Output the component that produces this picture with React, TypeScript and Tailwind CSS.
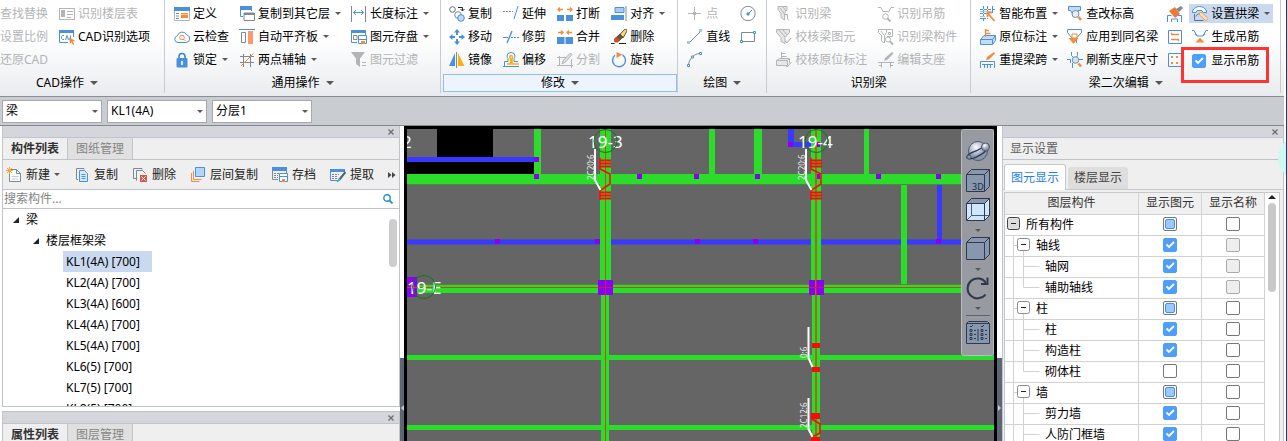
import { useState } from 'react'
import type { ReactNode } from 'react'
import clsx from 'clsx'

// =============================================================================
// ICONS
// =============================================================================

const BLUE = '#4a90dc'
const SLATE = '#7d8a96'
const ORANGE = '#f58b3c'

const icons: Record<string, ReactNode> = {
  floorTable: (
    <>
      <rect x="0.5" y="2.5" width="15" height="11" />
      <path d="M2 4h4v7H2z" fill="currentColor" stroke="none" />
      <path d="M8 5.500h6M8 8.500h6M8 11.500h4" />
    </>
  ),
  cadOptions: (
    <>
      <path d="M0 1h15v3H0z" fill={BLUE} stroke="none" />
      <path d="M.5 4v9.500H9M14.500 4v4" stroke={BLUE} />
      <path d="M5 6.500H3.500L2.500 7.500v2l1 1H5M6.500 11l1.500-4.500L9.500 11M11.500 6.500v4" stroke={BLUE} />
      <path d="M10 8.500l6 3-2.200 1 1.500 2.700-1.300.8-1.600-3L11 15z" fill={ORANGE} stroke="none" />
    </>
  ),
  define: (
    <>
      <path d="M0 1h16v4H0z" fill={BLUE} stroke="none" />
      <path d="M.5 5v9.500h15V5" stroke="#a9b8c8" fill="#fff" />
      <path d="M2 7.500h3M2 10h3M2 12.500h3" stroke={SLATE} />
      <path d="M7 7h7v5H7z" fill={ORANGE} stroke="none" />
      <path d="M7 8.500h7" stroke="#ffd27a" />
    </>
  ),
  cloud: (
    <>
      <path d="M4 13.500a3.400 3.400 0 0 1-.6-6.700A5 5 0 0 1 12.800 6 3.800 3.800 0 0 1 12 13.500z" stroke={BLUE} />
      <circle cx="8" cy="8.500" r="2.300" stroke={ORANGE} />
      <path d="M9.700 10.200l2 2" stroke={ORANGE} />
    </>
  ),
  lock: (
    <>
      <path d="M5 7V4.500a3 3 0 0 1 6 0V7" stroke="#3f80cf" strokeWidth="1.600" />
      <rect x="2.500" y="6" width="11" height="9.500" rx="1" fill={BLUE} stroke="none" />
      <path d="M8 9v4" stroke="#fff" strokeWidth="1.600" />
    </>
  ),
  copyFloor: (
    <>
      <path d="M1 0h12v4H1z" fill={BLUE} stroke="none" />
      <path d="M1.500 4v6.500H4M12.500 4v1" stroke={BLUE} />
      <path d="M5 7h10.500v7.500H5z" stroke={SLATE} fill="#fff" />
      <path d="M5 8h10.500" stroke={SLATE} strokeWidth="2" />
    </>
  ),
  slab: (
    <>
      <path d="M0 .5h16" stroke={BLUE} />
      <path d="M2.500 3.500h4v10h-4z" stroke={SLATE} />
      <path d="M9 2h5v13H9z" fill="#fb9a6b" stroke="none" />
    </>
  ),
  auxAxis: (
    <>
      <path d="M1 4.500h14M1 10.500h14M4.500 2v13M11.500 2v13" stroke={SLATE} />
      <path d="M2 14L14.500 1.500" stroke={ORANGE} />
    </>
  ),
  dimension: (
    <>
      <path d="M.5 0v16M14.500 0v16" stroke={SLATE} />
      <path d="M2 6.500h11M5 4L2.500 6.500 5 9M10 4l2.500 2.500L10 9" stroke={BLUE} />
    </>
  ),
  store: (
    <>
      <path d="M0 1h15v3H0z" fill={BLUE} stroke="none" />
      <path d="M.5 4v9.500H6M14.500 4v2" stroke={BLUE} />
      <path d="M2.500 6.500H6v4H2.500z" stroke={SLATE} />
      <path d="M7.500 6.500h8v8h-8z" stroke={BLUE} fill="#fff" />
      <path d="M8 10.500h7" stroke={BLUE} />
      <path d="M10 12h4v3h-4z" fill={ORANGE} stroke="none" />
    </>
  ),
  filter: (
    <>
      <path d="M0 0h14L9 6.500V15L5 12V6.500z" fill="currentColor" stroke="none" />
      <path d="M11 10.500h4M11 13.500h4" />
    </>
  ),
  copyRound: (
    <>
      <circle cx="3.500" cy="3.500" r="2.800" stroke="#5f6c78" fill="#fff" />
      <path d="M9 1.500h4.500v3M11.500 3l2 2 2-2" stroke="#222" />
      <circle cx="9" cy="9" r="3.300" stroke={SLATE} fill="#fff" />
      <circle cx="12" cy="12" r="3.300" stroke={BLUE} fill="#bcd9f8" />
    </>
  ),
  move: (
    <path
      d="M8 0l3 3.500H9V6H7V3.500H5zM8 16l3-3.500H9V10H7v2.500H5zM0 8l3.500-3v2H6v2H3.500v2zM16 8l-3.500-3v2H10v2h2.500v2z"
      fill={BLUE}
      stroke="none"
    />
  ),
  mirror: (
    <>
      <path d="M6 1v13H0z" fill={BLUE} stroke="none" />
      <path d="M7.500 0v16" stroke={SLATE} />
      <path d="M9 1l6.500 13H9z" fill="#fbb012" stroke="none" />
    </>
  ),
  extend: (
    <>
      <path d="M0 5.500h10" stroke={SLATE} strokeDasharray="2 1" />
      <path d="M15 0l-4 13" stroke={BLUE} />
    </>
  ),
  trim: (
    <>
      <path d="M0 8.500h5" stroke={SLATE} />
      <path d="M8 8.500h8" stroke={BLUE} strokeDasharray="2 1" />
      <path d="M9 2L4 14" stroke={BLUE} strokeWidth="1.400" />
    </>
  ),
  offset: (
    <>
      <path d="M1.500 14V9.500H5V6.500A4 4 0 0 1 4 4a4 3.500 0 0 1 8 0 4 4 0 0 1-1 2.500v3h4" stroke={BLUE} />
      <path d="M0 14.500h16" stroke={BLUE} />
      <path d="M4 12h3.500V6.500C6 5 7 3.500 8 3.500s2 1.500 1 3V12H16" stroke="#fbb012" strokeWidth="1.500" />
    </>
  ),
  breakApart: (
    <>
      <path d="M0 9h7v6H0zM9 9h7v6H9z" fill={BLUE} stroke="none" />
      <path d="M6 3.500H1M3 1.500l-2 2 2 2M10 3.500h5M13 1.500l2 2-2 2" stroke={ORANGE} strokeWidth="1.300" />
    </>
  ),
  merge: (
    <>
      <path d="M0 8h7.500v7H0zM8.500 8H16v7H8.500z" fill={BLUE} stroke="none" />
      <path d="M1 3.500h5M4 1.500l2 2-2 2M15 3.500h-5M12 1.500l-2 2 2 2" stroke={ORANGE} strokeWidth="1.300" />
    </>
  ),
  split: (
    <>
      <path d="M0 5.500h9M2.500 4v10M0 13.500h16M14.500 7v9" />
      <path d="M5 12l1.500-4 7-7L15 2.500l-6 7z" fill="#dcdee0" />
    </>
  ),
  align: (
    <>
      <path d="M4 1.500h9v5H4z" fill="#a9ccf4" stroke={BLUE} />
      <path d="M0 9h13v5H0z" fill={BLUE} stroke="none" />
      <path d="M15 0v15" stroke={SLATE} />
    </>
  ),
  erase: (
    <>
      <path d="M14 0h2v2l-4 7-4-2.500z" fill="#f7d97c" stroke="#3c3020" strokeWidth=".8" />
      <path d="M9 5l3 3-4 4-3.500-3z" fill="#6d5434" stroke="#3c3020" strokeWidth=".6" />
      <circle cx="5.500" cy="11" r="2.600" fill="#c9502e" stroke="none" />
      <path d="M0 14.500h3.500M8 14.500h7" stroke="#222" />
    </>
  ),
  rotate: (
    <>
      <path d="M11.500 2.800a6.500 6.500 0 1 1-7.500.4" stroke={BLUE} strokeWidth="1.400" />
      <path d="M5.500 0l6 2.500-6 3.500z" fill={ORANGE} stroke="none" />
    </>
  ),
  point: (
    <>
      <path d="M7.500 1v13M1 7.500h13" />
      <path d="M6 6h3v3H6z" fill="currentColor" stroke="none" />
    </>
  ),
  line: (
    <>
      <path d="M2 14L14 2" stroke={SLATE} />
      <path d="M0 12h3v3H0zM12 0h3v3h-3z" fill="#9cc5f2" stroke="none" />
    </>
  ),
  arc: (
    <>
      <path d="M1.500 13C2 7 7 1.500 13 1.500" stroke={SLATE} />
      <path d="M.5 12.500h2v2h-2zM12.500.5h2v2h-2zM4.500 4h2v2h-2z" stroke={BLUE} fill="#fff" />
    </>
  ),
  circle: (
    <>
      <circle cx="8" cy="7.500" r="7.200" stroke={SLATE} />
      <path d="M8 8l4-4" stroke={BLUE} />
      <path d="M7 7h2v2H7z" fill={BLUE} stroke={BLUE} />
    </>
  ),
  rect: (
    <>
      <path d="M1.500 3.500h13v9h-13z" stroke={SLATE} />
      <path d="M.5 11.500h2v2h-2zM13.500 2.500h2v2h-2z" stroke={BLUE} fill="#fff" />
    </>
  ),
  beamFind: (
    <path d="M2 .5h9v3L8.500 7.500V14L5 11.500v-4L2 3.500zM4 2l4.500 6M7 1l3 4M9 8.500h2.500V13l1.500 1.500" fill="#e6e7e8" />
  ),
  beamCheck: (
    <path d="M.5.500h13v3L9 8.500v6l-4-2v-4l-4.500-5zM3 1l6 7M7 1l4 5M9 12l2 2 4-5" fill="#e6e7e8" />
  ),
  noteCheck: (
    <path d="M5.500 0v7M5.500 1.500h4M5.500 4.500h5M.5 8.500l3-2h10l-2 2zM.5 8.500h11v5H.5zM13.500 7v4M9 13l2 2 4.500-5" fill="#e6e7e8" />
  ),
  hangFind: (
    <>
      <path d="M0 1.500h3l2 4h6l2-4h3" />
      <circle cx="7.500" cy="10.500" r="2.800" />
      <path d="M9.500 12.500l3 3" strokeWidth="2" />
    </>
  ),
  partFind: (
    <>
      <path d="M.5.500h8v3l-2 3V14l-3-2V6.500l-3-3zM8 .5h6.500v7H9M10.500 3.500h2v2h-2zM3 2l3 4" />
      <circle cx="10" cy="10.500" r="2.500" />
      <path d="M12 12.500l3 3" strokeWidth="2" />
    </>
  ),
  support: (
    <>
      <path d="M0 10.500h16M3.500 11v4.500M12.500 11v4.500M1 13.500h3M12 13.500h3" />
      <path d="M6 9l1-3 7-6 1.500 1.500L9 8z" fill="currentColor" stroke="none" />
    </>
  ),
  smartLay: (
    <>
      <path d="M0 3.500h15M0 7.500h9M0 12.500h6M3.500 0v16M7.500 0v13M12.500 0v7" stroke={BLUE} strokeDasharray="3 1" />
      <path d="M0 5.500h10M0 10.500h5" stroke="#9cc5f2" />
      <path d="M7.500 7l7 8M7.500 6.500H12M7.500 6.500V11" stroke={ORANGE} strokeWidth="1.800" />
    </>
  ),
  origNote: (
    <>
      <path d="M.5 10.500l3.500-4h11.500v5l-3 4H.5zM.5 10.500h12v5M12.500 10.500l3-4" fill="#c3ddf8" stroke={BLUE} />
      <path d="M5.500 0v8M5.500 1.500H9M5.500 4.500h5" stroke={ORANGE} strokeWidth="1.300" />
    </>
  ),
  respan: (
    <>
      <path d="M.5 16V9.500h14V16M4.500 16v-3M7.500 16v-3M10.500 16v-3M2 12.500h11" stroke={BLUE} />
      <path d="M6 8l1-3 7-5 1 1.500L9 7.500z" fill={ORANGE} stroke="none" />
    </>
  ),
  elevation: (
    <>
      <path d="M1.500.500h12v4h-2.500v4H6L3.500 4.500h-2z" stroke={BLUE} fill="#c3dcf8" />
      <circle cx="8.500" cy="8" r="3.500" stroke={SLATE} fill="#e2effd" />
      <path d="M11.500 11l2.500 3" stroke={ORANGE} strokeWidth="2.600" />
    </>
  ),
  applyBeam: (
    <>
      <path d="M.5.500h14v3L9.500 9v5M.5.500v3L5 9" stroke={BLUE} fill="#fff" />
      <path d="M5 5h5v4H5z" stroke={ORANGE} />
      <path d="M1.500 9h10l-5 6z" fill={ORANGE} stroke="none" />
    </>
  ),
  refreshSize: (
    <>
      <path d="M0 7.500h3.500V11M4.500 0v3.500L6 5M10.500 0v3.500L9.500 5M12 7.500h4M5.500 11v5" stroke={BLUE} />
      <circle cx="8.500" cy="8" r="3.300" stroke={SLATE} fill="#cfe4fa" />
      <path d="M11.500 11.500l2.500 3" stroke={ORANGE} strokeWidth="2.600" />
    </>
  ),
  brush: (
    <>
      <path d="M.5 16V9.500h4M10 9.500h4.500V16M4.500 16v-3h6v3" stroke={BLUE} />
      <path d="M2 5l6-4 5 7-5 4z" fill="#ef7a35" stroke="none" />
      <path d="M9 3l5-3 2 2-4 4z" fill={SLATE} stroke="none" />
    </>
  ),
  section: (
    <>
      <path d="M1.500 1.500h13v13h-13z" stroke={BLUE} />
      <path d="M4 5.500h8M4 10.500h8M4 5l1-1M12 11l-1 1" stroke={ORANGE} strokeWidth="1.400" />
    </>
  ),
  dots: (
    <>
      <path d="M1.500 1.500h13v13h-13z" stroke={BLUE} />
      <path d="M4 4h2v2H4zM9 4h2v2H9zM4 10h2v2H4zM9 10h2v2H9z" fill={ORANGE} stroke="none" />
    </>
  ),
  arch: (
    <>
      <path d="M.5 6.500V5C3-1 12-1 14.500 5v1.500H11l-1-2H5l-1 2z" stroke={BLUE} fill="#fff" />
      <path d="M2.500 8v6.500h9M4 10.500c2-4 5-4 7 0" stroke="#5c6f86" />
      <path d="M7 7l3-.5 6 6-2 2.500-6.500-6z" fill="#fbe0bb" stroke={ORANGE} strokeWidth=".8" />
    </>
  ),
  hanger: (
    <>
      <path d="M0 1.500h2l3 5.500h6l3-5.500h2M3 5.500h2M11 5.500h2" stroke={BLUE} />
      <path d="M8 8.500l4.500 5h-9z" fill={ORANGE} stroke="none" />
    </>
  ),
  newDoc: (
    <>
      <path d="M4 2.500h6.500l4 4v8H3.500V7M10.500 2.500v4h4" stroke={SLATE} fill="#fff" />
      <path d="M5.500 9.500h7M5.500 12h7" stroke="#c2cad2" />
      <path d="M3.500 0v7M0 3.500h7M1 1l5 5M6 1L1 6" stroke="#f5a53c" />
    </>
  ),
  copyDoc: (
    <>
      <path d="M10 2.500V1.500H2.500v11H4" stroke={SLATE} />
      <path d="M5.500 3.500h5l3 3v8h-8z" stroke={BLUE} fill="#d9e9fb" />
      <path d="M7.500 7.500h4M7.500 9.500h4M7.500 11.500h4" stroke={BLUE} />
    </>
  ),
  deleteDoc: (
    <>
      <path d="M10 2.500V1.500H1.500v10H4M5 13.500H4.500v-10h6l3 3" stroke={SLATE} />
      <path d="M8 8h7v7H8z" fill="#d9534f" stroke="none" />
      <path d="M9.500 9.500l4 4M13.500 9.500l-4 4" stroke="#fff" />
    </>
  ),
  floorCopy: (
    <>
      <path d="M1.500 6v8.500h8M3.500 4v8.500h8" stroke={ORANGE} />
      <path d="M5.500.500h9v9h-9z" stroke={BLUE} fill="#b5d4fa" />
    </>
  ),
  archive: (
    <>
      <path d="M0 0h15v4H0z" fill={BLUE} stroke="none" />
      <path d="M.5 4v8.500H6M14.500 4v2" stroke={SLATE} />
      <path d="M2 6.500h5M2 8.500h4M2 10.500h4" stroke={SLATE} strokeDasharray="2 1" />
      <path d="M7.500 6.500h8v8h-8zM8 9.500h7" stroke={BLUE} fill="#fff" />
      <path d="M10 12h3v3h-3z" fill={ORANGE} stroke="none" />
    </>
  ),
  extract: (
    <>
      <path d="M0 2h15v3H0z" fill={BLUE} stroke="none" />
      <path d="M.5 5v8.500H8M14.500 5v2" stroke={BLUE} />
      <path d="M2 7.500h7M2 9.500h5M2 11.500h5" stroke={SLATE} strokeDasharray="2 1" />
      <path d="M15.500 5L9 13" stroke="#4d6270" strokeWidth="2" />
      <path d="M10 12l-3 3" stroke="#32b5d8" strokeWidth="1.500" />
    </>
  ),
}

function Icon({ name }: { name: string }) {
  return (
    <svg viewBox="0 0 16 16" className="size-4 shrink-0" fill="none" stroke="currentColor" aria-hidden>
      {icons[name]}
    </svg>
  )
}

function Caret({ className = '' }: { className?: string }) {
  return (
    <svg viewBox="0 0 6 3" className={clsx('h-[3px] w-1.5 shrink-0 fill-[#585858]', className)} aria-hidden>
      <path d="M0 0h6L3 3z" />
    </svg>
  )
}

// =============================================================================
// RIBBON
// =============================================================================

interface ToolItem {
  icon?: string
  label?: string
  name?: string
  menu?: boolean
  disabled?: boolean
  active?: boolean
}

function Tool({ icon, label, name, menu, disabled, active }: ToolItem) {
  return (
    <button
      type="button"
      disabled={disabled}
      aria-label={label ?? name}
      className={clsx(
        'flex items-center gap-[3px] whitespace-nowrap',
        disabled ? 'text-[#b2b4b6]' : 'text-black',
        active ? '-mx-[3px] my-0.5 h-[19px] bg-[#c9d9f0] px-[3px]' : 'h-[23px]',
      )}
    >
      {icon && <Icon name={icon} />}
      {label && <span>{label}</span>}
      {menu && <Caret className="ml-0.5" />}
    </button>
  )
}

function ToolColumn({ items, children }: { items: ToolItem[]; children?: ReactNode }) {
  return (
    <div className="flex flex-col items-start">
      {items.map((item) => (
        <Tool key={item.label ?? item.name} {...item} />
      ))}
      {children}
    </div>
  )
}

interface GroupProps {
  title: string
  menu?: boolean
  hot?: boolean
  bodyClass: string
  titleClass?: string
  children: ReactNode
}

function Group({ title, menu = true, hot, bodyClass, titleClass, children }: GroupProps) {
  return (
    <section className="flex shrink-0 flex-col border-r border-[#c8cbcf] pt-0.5">
      <div className={clsx('flex h-[72px] items-start', bodyClass)}>{children}</div>
      <button
        type="button"
        className={clsx(
          'flex h-[18px] items-center justify-center gap-1.5 border whitespace-nowrap',
          hot ? 'ml-0.5 border-[#8fc0f2] bg-[#edf4fd]' : 'border-transparent',
          titleClass,
        )}
      >
        {title}
        {menu && (
          <svg viewBox="0 0 8 4" className="h-1 w-2 fill-[#555]" aria-hidden>
            <path d="M0 0h8L4 4z" />
          </svg>
        )}
      </button>
    </section>
  )
}

function Ribbon() {
  const [showHanger, setShowHanger] = useState(true)

  return (
    <header className="flex h-[97px] shrink-0 border-b border-[#8b8e94] bg-linear-to-b from-white from-40% to-[#e9ecee] pb-[3px]">
      <Group title="CAD操作" bodyClass="gap-[11px] pr-3.5" titleClass="pr-[30px]">
        <ToolColumn
          items={[
            { label: '查找替换', disabled: true },
            { label: '设置比例', disabled: true },
            { label: '还原CAD', disabled: true },
          ]}
        />
        <ToolColumn
          items={[
            { icon: 'floorTable', label: '识别楼层表', disabled: true },
            { icon: 'cadOptions', label: 'CAD识别选项' },
          ]}
        />
      </Group>

      <Group title="通用操作" bodyClass="gap-[10px] pl-[9px] pr-[11px]">
        <ToolColumn
          items={[
            { icon: 'define', label: '定义' },
            { icon: 'cloud', label: '云检查' },
            { icon: 'lock', label: '锁定', menu: true },
          ]}
        />
        <ToolColumn
          items={[
            { icon: 'copyFloor', label: '复制到其它层', menu: true },
            { icon: 'slab', label: '自动平齐板', menu: true },
            { icon: 'auxAxis', label: '两点辅轴', menu: true },
          ]}
        />
        <ToolColumn
          items={[
            { icon: 'dimension', label: '长度标注', menu: true },
            { icon: 'store', label: '图元存盘', menu: true },
            { icon: 'filter', label: '图元过滤', disabled: true },
          ]}
        />
      </Group>

      <Group title="修改" hot bodyClass="gap-[11px] pl-2 pr-3">
        <ToolColumn
          items={[
            { icon: 'copyRound', label: '复制' },
            { icon: 'move', label: '移动' },
            { icon: 'mirror', label: '镜像' },
          ]}
        />
        <ToolColumn
          items={[
            { icon: 'extend', label: '延伸' },
            { icon: 'trim', label: '修剪' },
            { icon: 'offset', label: '偏移' },
          ]}
        />
        <ToolColumn
          items={[
            { icon: 'breakApart', label: '打断' },
            { icon: 'merge', label: '合并' },
            { icon: 'split', label: '分割', disabled: true },
          ]}
        />
        <ToolColumn
          items={[
            { icon: 'align', label: '对齐', menu: true },
            { icon: 'erase', label: '删除' },
            { icon: 'rotate', label: '旋转' },
          ]}
        />
      </Group>

      <Group title="绘图" bodyClass="gap-[10px] pl-[9px] pr-[10px]">
        <ToolColumn
          items={[
            { icon: 'point', label: '点', disabled: true },
            { icon: 'line', label: '直线' },
            { icon: 'arc', name: '弧线' },
          ]}
        />
        <ToolColumn
          items={[
            { icon: 'circle', name: '圆' },
            { icon: 'rect', name: '矩形' },
          ]}
        />
      </Group>

      <Group title="识别梁" menu={false} bodyClass="gap-[11px] pl-[9px] pr-[13px]">
        <ToolColumn
          items={[
            { icon: 'beamFind', label: '识别梁', disabled: true },
            { icon: 'beamCheck', label: '校核梁图元', disabled: true },
            { icon: 'noteCheck', label: '校核原位标注', disabled: true },
          ]}
        />
        <ToolColumn
          items={[
            { icon: 'hangFind', label: '识别吊筋', disabled: true },
            { icon: 'partFind', label: '识别梁构件', disabled: true },
            { icon: 'support', label: '编辑支座', disabled: true },
          ]}
        />
      </Group>

      <Group title="梁二次编辑" bodyClass="gap-[9px] pl-[9px] pr-[10px]">
        <ToolColumn
          items={[
            { icon: 'smartLay', label: '智能布置', menu: true },
            { icon: 'origNote', label: '原位标注', menu: true },
            { icon: 'respan', label: '重提梁跨', menu: true },
          ]}
        />
        <ToolColumn
          items={[
            { icon: 'elevation', label: '查改标高' },
            { icon: 'applyBeam', label: '应用到同名梁' },
            { icon: 'refreshSize', label: '刷新支座尺寸' },
          ]}
        />
        <ToolColumn
          items={[
            { icon: 'brush', name: '格式刷' },
            { icon: 'section', name: '截面' },
            { icon: 'dots', name: '配筋' },
          ]}
        />
        <ToolColumn
          items={[
            { icon: 'arch', label: '设置拱梁', menu: true, active: true },
            { icon: 'hanger', label: '生成吊筋' },
          ]}
        >
          <label className="relative flex h-[25px] items-center gap-[5px] whitespace-nowrap">
            <Check state={showHanger ? 'on' : 'off'} onToggle={() => setShowHanger(!showHanger)} />
            显示吊筋
            <span className="pointer-events-none absolute -top-px -left-[11px] h-9 w-[88px] border-3 border-[#fc3434]" />
          </label>
        </ToolColumn>
      </Group>
    </header>
  )
}

// =============================================================================
// CHECK BOX
// =============================================================================

type CheckState = 'on' | 'off' | 'mixed' | 'locked'

function Check({ state, label, onToggle }: { state: CheckState; label?: string; onToggle?: () => void }) {
  return (
    <span className="grid size-3.5 shrink-0">
      <input
        type="checkbox"
        aria-label={label}
        checked={state === 'on'}
        disabled={state === 'locked'}
        onChange={() => onToggle?.()}
        className={clsx(
          'col-start-1 row-start-1 size-3.5 appearance-none rounded-[2px] border',
          state === 'on' && 'border-[#4f9ffa] bg-[#4f9ffa]',
          (state === 'off' || state === 'mixed') && 'border-[#777] bg-white',
          state === 'locked' && 'border-[#aaa] bg-[#eee]',
        )}
      />
      {state === 'on' && (
        <svg viewBox="0 0 14 14" className="pointer-events-none col-start-1 row-start-1" fill="none" aria-hidden>
          <path d="M3.500 6.500L6 9l5-5" stroke="#fff" strokeWidth="1.800" />
        </svg>
      )}
      {state === 'mixed' && (
        <span className="pointer-events-none col-start-1 row-start-1 m-0.5 rounded-[2px] border border-[#3f8ff0] bg-[#9ac8ff]" />
      )}
    </span>
  )
}

// =============================================================================
// SELECTOR BAR
// =============================================================================

function Picker({ label, value }: { label: string; value: string }) {
  return (
    <div className="grid h-[23px] w-[100px] items-center">
      <select
        aria-label={label}
        defaultValue={value}
        className="col-start-1 row-start-1 h-full w-full appearance-none border border-[#a6a8ad] bg-white px-[3px]"
      >
        <option>{value}</option>
      </select>
      <Caret className="pointer-events-none col-start-1 row-start-1 mr-1 justify-self-end" />
    </div>
  )
}

function SelectorBar() {
  return (
    <div className="flex h-[29px] shrink-0 items-center gap-[5px] border-b border-[#85888f] bg-[#c9ccd1] pl-0.5">
      <Picker label="构件类型" value="梁" />
      <Picker label="构件名称" value="KL1(4A)" />
      <Picker label="分层" value="分层1" />
    </div>
  )
}

// =============================================================================
// PANELS
// =============================================================================

function PanelTop() {
  return (
    <div className="flex h-3 shrink-0 items-center justify-end border-b border-[#c0c3c9] bg-[#d5d6db] pr-[5px]">
      <button type="button" aria-label="关闭">
        <svg viewBox="0 0 6 6" className="size-1.5" stroke="#707070" strokeWidth="1.400" aria-hidden>
          <path d="M.5.5l5 5M5.500.5l-5 5" />
        </svg>
      </button>
    </div>
  )
}

function PanelTabs({ tabs }: { tabs: string[] }) {
  return (
    <div role="tablist" className="flex h-[22px] shrink-0 border-b border-[#c0c3c9] bg-[#efefef]">
      {tabs.map((tab, i) => (
        <button
          key={tab}
          type="button"
          role="tab"
          aria-selected={i === 0}
          className={clsx(
            'border-r border-[#c0c3c9] px-2',
            i === 0 ? 'font-bold text-[#333]' : 'bg-[#e0e0e0] text-[#858585]',
          )}
        >
          {tab}
        </button>
      ))}
    </div>
  )
}

const listTools = [
  { icon: 'newDoc', label: '新建', menu: true },
  { icon: 'copyDoc', label: '复制' },
  { icon: 'deleteDoc', label: '删除' },
  { icon: 'floorCopy', label: '层间复制' },
  { icon: 'archive', label: '存档' },
  { icon: 'extract', label: '提取' },
]

const beams = [
  'KL1(4A) [700]',
  'KL2(4A) [700]',
  'KL3(4A) [600]',
  'KL4(4A) [700]',
  'KL5(4A) [700]',
  'KL6(5) [700]',
  'KL7(5) [700]',
  'KL8(5) [700]',
]

function Twisty() {
  return (
    <svg viewBox="0 0 6 6" className="size-1.5 fill-[#222]" aria-hidden>
      <path d="M6 0v6H0z" />
    </svg>
  )
}

function ComponentList() {
  const [selected, setSelected] = useState(beams[0])

  return (
    <aside className="ml-0.5 flex w-[398px] shrink-0 flex-col gap-1">
      <section className="flex min-h-0 flex-1 flex-col overflow-hidden border-x border-b border-[#c0c3c9]">
        <PanelTop />
        <PanelTabs tabs={['构件列表', '图纸管理']} />
        <div className="flex h-[30px] shrink-0 items-center gap-3.5 border-b border-[#c0c3c9] bg-[#efefef] pl-[3px]">
          {listTools.map(({ icon, label, menu }) => (
            <button key={label} type="button" className="flex items-center gap-1 whitespace-nowrap text-[#222]">
              <Icon name={icon} />
              {label}
              {menu && <Caret />}
            </button>
          ))}
          <button type="button" aria-label="更多">
            <svg viewBox="0 0 8 6" className="h-1.5 w-2 fill-[#444]" aria-hidden>
              <path d="M0 0l3.500 3L0 6zM4 0l3.500 3L4 6z" />
            </svg>
          </button>
        </div>
        <div className="flex h-[19px] shrink-0 items-center border-b border-[#c0c3c9] pr-1.5">
          <input
            type="search"
            aria-label="搜索构件"
            placeholder="搜索构件..."
            className="min-w-0 flex-1 pl-px outline-none placeholder:text-[#858585]"
          />
          <svg viewBox="0 0 10 10" className="size-2.5" fill="none" stroke="#2a8cc8" strokeWidth="1.400" aria-hidden>
            <circle cx="4" cy="4" r="3.200" />
            <path d="M6.500 6.500l3 3" strokeWidth="1.800" />
          </svg>
        </div>
        <div className="flex min-h-0 flex-1 justify-between overflow-hidden">
          <ul role="tree" className="flex flex-col items-start">
            <li className="flex h-[21px] shrink-0 items-center gap-[7px] pl-[10px]">
              <Twisty />梁
            </li>
            <li className="flex h-[21px] shrink-0 items-center gap-[7px] pl-[30px]">
              <Twisty />
              楼层框架梁
            </li>
            {beams.map((beam) => (
              <li key={beam} className="h-[21px] shrink-0 pl-[60px]">
                <button
                  type="button"
                  onClick={() => setSelected(beam)}
                  className={clsx('h-[21px] pr-3 pl-[3px]', beam === selected && 'bg-[#c9d9f0]')}
                >
                  {beam}
                </button>
              </li>
            ))}
          </ul>
          <div className="mt-[10px] mr-0.5 h-12 w-2 rounded-full bg-[#cdcdcd]" />
        </div>
      </section>
      <section className="flex h-[30px] shrink-0 flex-col overflow-hidden border-x border-t border-[#c0c3c9]">
        <PanelTop />
        <PanelTabs tabs={['属性列表', '图层管理']} />
      </section>
    </aside>
  )
}

function Splitter({ side }: { side: 'left' | 'right' }) {
  return (
    <div className={clsx('flex shrink-0 items-end', side === 'left' ? 'w-1' : 'w-[5px]')}>
      <div className="flex h-[83px] w-full items-center justify-center bg-[#5d6774] pt-4">
        <svg viewBox="0 0 3 6" className="h-1.5 w-[3px] fill-[#c5cad0]" aria-hidden>
          <path d={side === 'left' ? 'M3 0v6L0 3z' : 'M0 0v6l3-3z'} />
        </svg>
      </div>
    </div>
  )
}

// =============================================================================
// DRAWING CANVAS
// =============================================================================

const GREEN = '#2bdc2b'
const WIRE = '#3838ff'
const NODE = '#8a00f0'
const BAR = '#fa0a0a'

// x, y of the small 5px beam nodes
const nodes = [
  [534, 157], [534, 174], [637, 174], [694, 174], [755, 174], [815, 174], [876, 174], [936, 174],
  [495, 239], [595, 239], [695, 239], [753, 239], [936, 239], [788, 142], [815, 142],
]

function HangerBar({ x }: { x: number }) {
  return (
    <g stroke={BAR} fill="none">
      <path d={`M${x - 1} 158v11l10 5v10l-9 6h-1v10`} strokeWidth="1.600" />
      <path
        d={`M${x - 1} 160.500h11M${x - 1} 163.500h11M${x - 1} 166.500h11M${x - 1} 192.500h11M${x - 1} 195.500h11M${x - 1} 198.500h11`}
        strokeWidth="2"
      />
      <path d={`M${x - 6} 149v31l5.500 10`} stroke="#fff" strokeWidth="2" />
      <text transform={`translate(${x - 7} 180) rotate(-90)`} fill="#eee" stroke="none" className="text-[8px]">
        2C20:6
      </text>
    </g>
  )
}

function Drawing() {
  return (
    <svg className="h-full w-full bg-[#656565]" aria-label="梁平面图" role="img">
      <g transform="translate(-407 -129)">
        <path d="M437 129h56v28h-56zM407 162h127v12H407z" fill="#000" />

        {/* secondary beams */}
        <path
          d="M407 157h128v5H407zM407 239.500h3000v5H407zM937 184h5v56h-5zM788 129h6v13h22v5h-28z"
          fill={WIRE}
        />

        {/* main beams */}
        <g fill={GREEN}>
          <path d="M534 129h7v45h-7zM709 129h6v45h-6zM754 129h8v45h-8zM864 129h5v45h-5z" />
          <path d="M407 174h3000v10H407zM407 285h3000v8H407zM407 355h3000v5H407zM407 425h3000v5H407z" />
          <path d="M901 184h6v101h-6z" />
          <path d="M600 129h11v156h-11zM601 285h8v3000h-8zM811 129h10v156h-10zM812 285h8v3000h-8z" />
        </g>
        <path
          d="M407 184.500h193M611 184.500h200M821 184.500h200M407 284.500h193M611 284.500h200M821 284.500h200"
          stroke="#3f8f3f"
        />

        {nodes.map(([x, y]) => (
          <rect key={`${x}-${y}`} x={x} y={y} width="5" height="5" fill={NODE} />
        ))}
        <path d="M598 280h15v15h-15zM809 280h15v15h-15zM407 277h10v20h-10z" fill={NODE} />

        {/* axes */}
        <path d="M407 287.500h3000" stroke="#c8461a" />
        <path d="M605.500 129v3000" stroke="#c8461a" />
        <path d="M816 129v3000" stroke="#a8681c" strokeWidth="2" />
        <path d="M598 287.500h15M605.500 280v15M809 287.500h15M816.500 280v15" stroke="#d0106a" />

        <HangerBar x={601} />
        <HangerBar x={812} />

        <path d="M812 343h8v5h-8zM812 367h8v5h-8zM811 413h9v6h-9zM811 437h9v6h-9z" fill={BAR} />
        <path d="M812 419l8 5v9l-8 4" fill="none" stroke={BAR} strokeWidth="1.600" />
        <path d="M808.500 327v31l4 9M808.500 398v31l4 8" fill="none" stroke="#fff" strokeWidth="2" />
        <g fill="#eee" className="text-[8px]">
          <text transform="translate(807 358) rotate(-90)">0:6</text>
          <text transform="translate(807 428) rotate(-90)">2C12:6</text>
        </g>

        <g fill="#fff" className="text-[17px]">
          <text x="588" y="148">19-3</text>
          <text x="798" y="148">19-4</text>
          <text x="407" y="294">19-E</text>
          <text x="402" y="148">2</text>
        </g>
        <g fill="none" stroke="#0c7a0c">
          <circle cx="605.500" cy="141" r="11.500" />
          <circle cx="816.500" cy="141" r="11.500" />
          <circle cx="424" cy="287" r="11.500" />
        </g>
      </g>
    </svg>
  )
}

function CubeIcon({ kind }: { kind: 'label' | 'glass' | 'solid' }) {
  return (
    <svg viewBox="0 0 24 24" className="size-6" stroke="#2e3a4c" fill="none" aria-hidden>
      <path d="M.5 5.500l5-5h18v17l-5 5H.5z" fill={kind === 'glass' ? '#cfe6ff' : '#8797ae'} />
      {kind === 'glass' && <path d="M.5 5.500l5-5h18l-5 5z" fill="#8797ae" />}
      <path d="M.5 5.500h18v17M18.500 5.500l5-5" />
      {kind === 'glass' && <path d="M5.500 5.500v12h13M5.500 17.500l-5 5M18.500 17.500h5" strokeWidth=".8" />}
      {kind === 'label' && (
        <text x="6" y="21" fill="#1f2937" stroke="none" className="text-[9px]">
          3D
        </text>
      )}
    </svg>
  )
}

function ViewBar() {
  return (
    <div className="absolute top-0 right-0 flex w-[33px] flex-col items-center gap-[5px] rounded-[3px] border border-[#b8bbc0] bg-[#979aa0] pt-[10px] pb-[10px]">
      <button type="button" aria-label="动态观察">
        <svg viewBox="0 0 24 24" className="size-6" aria-hidden>
          <defs>
            <radialGradient id="ball" cx="40%" cy="30%">
              <stop offset="0" stopColor="#fff" />
              <stop offset="1" stopColor="#8797ae" />
            </radialGradient>
          </defs>
          <circle cx="12" cy="11" r="9.500" fill="url(#ball)" stroke="#4c5a6e" />
          <path d="M1 18c-1-4 5-5 11-8s7-5 7-5M1 18c4 3 15-3 21-9" fill="none" stroke="#2e3a4c" strokeWidth="1.300" />
          <circle cx="19.500" cy="7" r="4" fill="url(#ball)" stroke="#4c5a6e" />
          <circle cx="3" cy="17" r="2" fill="#8797ae" stroke="#4c5a6e" />
        </svg>
      </button>
      <button type="button" aria-label="三维">
        <CubeIcon kind="label" />
      </button>
      <button type="button" aria-label="线框" className="flex flex-col items-center gap-[7px]">
        <CubeIcon kind="glass" />
        <Caret className="fill-[#2e3a4c]" />
      </button>
      <button type="button" aria-label="实体" className="flex flex-col items-center gap-[7px]">
        <CubeIcon kind="solid" />
        <Caret className="fill-[#2e3a4c]" />
      </button>
      <button type="button" aria-label="旋转" className="flex flex-col items-center gap-[7px]">
        <svg viewBox="0 0 24 24" className="size-6" fill="none" stroke="#2e3a4c" strokeWidth="2" aria-hidden>
          <path d="M19.500 18.500A10 10 0 1 1 20 7" />
          <path d="M21.500 1.500V8H15" />
        </svg>
        <Caret className="fill-[#2e3a4c]" />
      </button>
      <div className="h-px w-6 bg-[#5d626a]" />
      <button type="button" aria-label="显示列表">
        <svg viewBox="0 0 24 24" className="size-6" fill="none" stroke="#2e3a4c" aria-hidden>
          <path d="M.5 2.500l2-2h19l2 2v20H.5z" fill="#8797ae" />
          <path d="M.5 2.500h23M12 8v12M4 5l1 1 2-2M15 5l1 1 2-2" />
          <path d="M4 8.500h2v2H4zM4 12.500h2v2H4zM4 16.500h2v2H4zM15 8.500h2v2h-2zM15 12.500h2v2h-2zM15 16.500h2v2h-2z" />
          <path d="M8 9.500h2M8 13.500h2M8 17.500h2M19 9.500h2M19 13.500h2M19 17.500h2" />
        </svg>
      </button>
    </div>
  )
}

function Canvas() {
  return (
    <main className="relative min-w-0 flex-1 overflow-hidden border-x-3 border-t-3 border-black">
      <Drawing />
      <ViewBar />
    </main>
  )
}

// =============================================================================
// DISPLAY SETTINGS
// =============================================================================

interface LayerRow {
  name: string
  level: 0 | 1 | 2
  shape: CheckState
  title: CheckState
  last?: boolean
}

const layers: LayerRow[] = [
  { name: '所有构件', level: 0, shape: 'mixed', title: 'off' },
  { name: '轴线', level: 1, shape: 'on', title: 'locked' },
  { name: '轴网', level: 2, shape: 'on', title: 'locked' },
  { name: '辅助轴线', level: 2, shape: 'on', title: 'locked', last: true },
  { name: '柱', level: 1, shape: 'mixed', title: 'off' },
  { name: '柱', level: 2, shape: 'on', title: 'off' },
  { name: '构造柱', level: 2, shape: 'on', title: 'off' },
  { name: '砌体柱', level: 2, shape: 'off', title: 'off', last: true },
  { name: '墙', level: 1, shape: 'mixed', title: 'off' },
  { name: '剪力墙', level: 2, shape: 'on', title: 'off' },
  { name: '人防门框墙', level: 2, shape: 'on', title: 'off' },
]

function Branch({ level, last }: { level: number; last?: boolean }) {
  const width = [19, 29, 38][level]
  return (
    <svg width={width} height="21" fill="none" stroke="#d2d2d2" className="shrink-0" aria-hidden>
      {level > 0 && <path d="M8.500 0v21" />}
      {level === 1 && <path d="M8.500 10.500h5M18.500 16v5" />}
      {level === 2 && <path d={last ? 'M18.500 0v10.500h16' : 'M18.500 0v21M18.500 10.500h16'} />}
      {level < 2 && (
        <>
          <rect
            x={level * 10 + 2.5}
            y="3.500"
            width="12"
            height="12"
            rx="2"
            stroke={level ? '#8a8a8a' : '#444'}
            fill={level ? '#fff' : '#ddd'}
          />
          <path d={`M${level * 10 + 6} 9.500h5`} stroke="#222" />
        </>
      )}
    </svg>
  )
}

function LayerTable() {
  const [rows, setRows] = useState(layers)

  const toggle = (index: number, key: 'shape' | 'title') => {
    setRows((prev) => prev.map((r, i) => (i === index ? { ...r, [key]: r[key] === 'on' ? 'off' : 'on' } : r)))
  }

  return (
    <div className="mx-px mt-0.5 mr-[3px] flex flex-1 items-start border border-[#c6c8cc] bg-white">
      <table className="flex-1 table-fixed border-collapse">
        <colgroup>
          <col />
          <col className="w-[63px]" />
          <col className="w-[63px]" />
        </colgroup>
        <thead>
          <tr className="h-[21px] bg-[#f0f0f0] text-[#333]">
            {['图层构件', '显示图元', '显示名称'].map((head) => (
              <th key={head} className="border-r border-b border-[#d2d2d2] p-0 font-normal">
                {head}
              </th>
            ))}
          </tr>
        </thead>
        <tbody>
          {rows.map((row, i) => (
            <tr key={i} className="h-[21px]">
              <td className="border-r border-b border-[#d2d2d2] p-0">
                <div className="flex h-5 items-center gap-0.5 overflow-hidden">
                  <Branch level={row.level} last={row.last} />
                  {row.name}
                </div>
              </td>
              <td className="border-r border-b border-[#d2d2d2] p-0">
                <div className="flex h-5 items-start justify-center pt-0.5">
                  <Check state={row.shape} label={`${row.name} 显示图元`} onToggle={() => toggle(i, 'shape')} />
                </div>
              </td>
              <td className="border-r border-b border-[#d2d2d2] p-0">
                <div className="flex h-5 items-start justify-center pt-0.5">
                  <Check state={row.title} label={`${row.name} 显示名称`} onToggle={() => toggle(i, 'title')} />
                </div>
              </td>
            </tr>
          ))}
        </tbody>
      </table>
      <div className="flex w-3.5 flex-col items-center gap-1 pt-0.5">
        <svg viewBox="0 0 8 4" className="h-1 w-2 fill-[#222]" aria-hidden>
          <path d="M4 0l4 4H0z" />
        </svg>
        <div className="h-[89px] w-2 rounded-full bg-[#c8c8c8]" />
      </div>
    </div>
  )
}

function DisplaySettings() {
  return (
    <aside className="flex w-[282px] shrink-0 flex-col overflow-hidden border-x border-[#c0c3c9] bg-[#efefef]">
      <PanelTop />
      <h2 className="flex h-[22px] shrink-0 items-center border-b border-[#c0c3c9] pl-[7px] text-[#606060]">
        显示设置
      </h2>
      <div role="tablist" className="flex h-[30px] shrink-0 items-end gap-0.5 border-b border-[#c6c8cc] pl-px">
        <button
          type="button"
          role="tab"
          aria-selected
          className="-mb-px h-[26px] rounded-t-[3px] border border-b-0 border-[#c6c8cc] bg-white px-1.5 text-[#1e7fe8]"
        >
          图元显示
        </button>
        <button
          type="button"
          role="tab"
          aria-selected={false}
          className="h-[22px] rounded-t-[3px] bg-[#dedede] px-1.5 text-[#444]"
        >
          楼层显示
        </button>
      </div>
      <LayerTable />
    </aside>
  )
}

// =============================================================================
// APP
// =============================================================================

export default function App() {
  return (
    <div className="relative flex h-screen flex-col overflow-hidden border-r border-[#1c3a6e] bg-white pr-0.5 font-['Noto_Sans','Noto_Sans_CJK_SC',sans-serif] text-[12px] leading-4 text-black">
      <Ribbon />
      <SelectorBar />
      <div className="flex min-h-0 flex-1">
        <ComponentList />
        <Splitter side="left" />
        <Canvas />
        <Splitter side="right" />
        <DisplaySettings />
      </div>
      <div className="pointer-events-none absolute top-[136px] -right-9 size-11 rounded-full bg-[#cdf8f4]" />
    </div>
  )
}
